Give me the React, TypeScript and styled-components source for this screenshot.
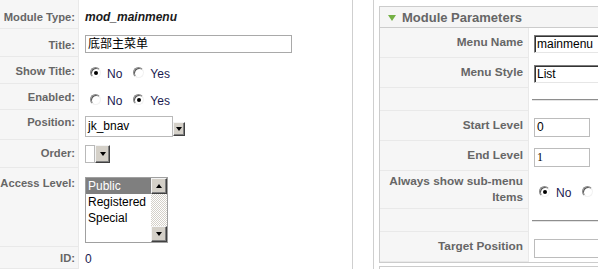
import * as React from 'react'
import styled, { createGlobalStyle } from 'styled-components'

const GlobalStyle = createGlobalStyle`
  html, body {
    margin: 0;
    padding: 0;
    background: #fff;
  }
  body {
    font-family: "Liberation Sans", Arial, Helvetica, sans-serif;
    overflow: hidden;
  }
`

const Page = styled.div`
  display: flex;
  width: 598px;
  height: 269px;
  overflow: hidden;
  background: #fff;
`

/* ---------- left: module details ---------- */

const DetailsPane = styled.div`
  flex: none;
  width: 414px;
  margin-left: -62px;
  border-right: 1px solid #cfcfcf;
  display: flex;
  flex-direction: column;
`

const DetailRow = styled.div<{ $h?: number }>`
  display: grid;
  grid-template-columns: 141px 1fr;
  height: ${p => (p.$h ? `${p.$h}px` : 'auto')};
  flex: ${p => (p.$h ? 'none' : '1')};
`

const Key = styled.div<{ $top: number }>`
  box-sizing: border-box;
  background: #f6f6f6;
  border-right: 1px solid #e9e9e9;
  border-bottom: 1px solid #e9e9e9;
  padding: ${p => p.$top}px 3px 0 0;
  text-align: right;
  font-size: 11.2px;
  line-height: 13px;
  font-weight: bold;
  color: #666;
  white-space: nowrap;
`

const Value = styled.div<{ $top: number }>`
  padding: ${p => p.$top}px 0 0 6px;
  font-size: 12px;
  line-height: 14px;
  color: #1a1a50;
`

const ModuleType = styled.span`
  font-weight: bold;
  font-style: italic;
  color: #1a1a1a;
`

const TextBox = styled.div<{ $w: number }>`
  box-sizing: border-box;
  width: ${p => p.$w}px;
  height: 18px;
  border: 1px solid #a9a9a9;
  padding: 0 2px;
  background: #fff;
  font-family: "Liberation Sans", "Noto Sans CJK SC", sans-serif;
  font-size: 12px;
  line-height: 16px;
  color: #000;
`

const RadioGroup = styled.div`
  display: flex;
  align-items: flex-start;
  padding-left: 5px;
  white-space: nowrap;
`

const Radio = styled.span<{ $on?: boolean }>`
  flex: none;
  box-sizing: border-box;
  width: 11px;
  height: 11px;
  border-radius: 50%;
  background: #fff;
  border: 1px solid;
  border-color: #8a8a8a #f2f2f2 #f2f2f2 #8a8a8a;
  box-shadow: inset 1px 1px 0 #5a5a5a;
  display: flex;
  align-items: center;
  justify-content: center;

  &::after {
    content: '';
    display: ${p => (p.$on ? 'block' : 'none')};
    width: 4px;
    height: 4px;
    margin: 1px 0 0 1px;
    border-radius: 50%;
    background: #000;
  }
`

const RadioText = styled.span`
  margin: 0 11px 0 6px;
  font-size: 12px;
  line-height: 14px;
  color: #1a1a50;
`

const Dropdown = styled.div`
  display: flex;
  align-items: flex-end;
`

const DropField = styled.div<{ $w: number; $h: number }>`
  box-sizing: border-box;
  width: ${p => p.$w}px;
  height: ${p => p.$h}px;
  border: 1px solid #b9b9b9;
  background: #fff;
  padding-left: 2px;
  font-size: 12px;
  line-height: ${p => p.$h - 2}px;
  color: #000;
`

const DropButton = styled.div<{ $w: number; $h: number; $lift?: number }>`
  box-sizing: border-box;
  flex: none;
  width: ${p => p.$w}px;
  height: ${p => p.$h}px;
  margin-bottom: ${p => p.$lift ?? 0}px;
  background: #d4d0c8;
  border: 1px solid;
  border-color: #f4f4f4 #404040 #404040 #f4f4f4;
  box-shadow: inset -1px -1px 0 #808080;
  display: flex;
  align-items: center;
  justify-content: center;
`

const ArrowDown = styled.span`
  width: 0;
  height: 0;
  border-left: 3px solid transparent;
  border-right: 3px solid transparent;
  border-top: 4px solid #000;
`

const ArrowUp = styled.span`
  width: 0;
  height: 0;
  border-left: 3px solid transparent;
  border-right: 3px solid transparent;
  border-bottom: 4px solid #000;
`

const ListBox = styled.div`
  box-sizing: border-box;
  display: flex;
  width: 83px;
  height: 66px;
  border: 1px solid #a0a0a0;
  background: #fff;
`

const ListItems = styled.div`
  flex: 1;
  font-size: 12px;
  line-height: 16px;
`

const ListItem = styled.div<{ $selected?: boolean }>`
  padding-left: 2px;
  background: ${p => (p.$selected ? '#7f7f7f' : 'transparent')};
  color: ${p => (p.$selected ? '#fff' : '#000')};
`

const ScrollTrack = styled.div`
  flex: none;
  width: 16px;
  display: flex;
  flex-direction: column;
  justify-content: space-between;
  background-image: repeating-conic-gradient(#d4d0c8 0% 25%, #ffffff 0% 50%);
  background-size: 2px 2px;
`

const ScrollButton = styled(DropButton)`
  width: 16px;
  height: 16px;
`

/* ---------- right: module parameters ---------- */

const ParamsPane = styled.div`
  flex: none;
  width: 260px;
  margin-left: 20px;
  border-left: 1px solid #cfcfcf;
  padding: 6px 0 0 5px;
  display: flex;
  flex-direction: column;
  gap: 3px;
`

const Slider = styled.div`
  flex: none;
  width: 300px;
  border: 1px solid #cccccc;
  background: #fff;
`

const NextSlider = styled.div`
  flex: 1;
  width: 300px;
  border-top: 1px solid #cccccc;
  border-left: 1px solid #cccccc;
`

const SliderTitle = styled.div`
  display: flex;
  align-items: center;
  gap: 6px;
  height: 20px;
  padding-left: 8px;
  background: #f5f5f5;
  border-bottom: 1px solid #cccccc;
  font-size: 13px;
  font-weight: bold;
  color: #666;
`

const Toggle = styled.span`
  width: 0;
  height: 0;
  margin-top: 1px;
  border-left: 4.5px solid transparent;
  border-right: 4.5px solid transparent;
  border-top: 6px solid #74b044;
`

const ParamRow = styled.div<{ $h: number }>`
  display: grid;
  grid-template-columns: 149px 1fr;
  height: ${p => p.$h}px;
`

const ParamKey = styled.div`
  box-sizing: border-box;
  display: flex;
  align-items: center;
  justify-content: flex-end;
  text-align: right;
  padding: 0 5px 0 4px;
  background: #f6f6f6;
  border-right: 1px solid #e9e9e9;
  border-bottom: 1px solid #e9e9e9;
  font-size: 11.8px;
  line-height: 15.5px;
  font-weight: bold;
  color: #666;
`

const ParamValue = styled.div<{ $top?: number }>`
  display: flex;
  align-items: ${p => (p.$top !== undefined ? 'flex-start' : 'center')};
  padding: ${p => p.$top ?? 0}px 0 0 5px;
  white-space: nowrap;
`

const Field = styled.div<{ $w: number; $h: number; $inset?: boolean; $serif?: boolean }>`
  box-sizing: border-box;
  flex: none;
  width: ${p => p.$w}px;
  height: ${p => p.$h}px;
  margin-top: 2px;
  background: #fff;
  padding-left: 2px;
  font-family: ${p => (p.$serif ? '"Liberation Serif", "Times New Roman", serif' : 'inherit')};
  font-size: 12px;
  line-height: ${p => p.$h - 2}px;
  color: #000;
  border: 1px solid #bcbcbc;
  ${p =>
    p.$inset &&
    `
    border-color: #7b7b7b #e6e6e6 #e6e6e6 #7b7b7b;
    box-shadow: inset 1px 1px 0 #333;
  `}
`

const Rule = styled.div`
  flex: 1;
  margin-left: -2px;
  border-top: 1px solid #8e8e8e;
  border-bottom: 1px solid #e4e4e4;
`

interface Choice {
  label?: string;
  on?: boolean;
}

const Radios: React.FC<{ choices: Choice[] }> = ({ choices }) => (
  <RadioGroup>
    {choices.map((c, i) => (
      <React.Fragment key={i}>
        <Radio $on={c.on} />
        {c.label && <RadioText>{c.label}</RadioText>}
      </React.Fragment>
    ))}
  </RadioGroup>
)

const App: React.FC = () => {
  return (
    <Page>
      <GlobalStyle />
      <DetailsPane>
        <DetailRow $h={29}>
          <Key $top={11}>Module Type:</Key>
          <Value $top={10}>
            <ModuleType>mod_mainmenu</ModuleType>
          </Value>
        </DetailRow>
        <DetailRow $h={28}>
          <Key $top={10}>Title:</Key>
          <Value $top={6}>
            <TextBox $w={207}>底部主菜单</TextBox>
          </Value>
        </DetailRow>
        <DetailRow $h={27}>
          <Key $top={8}>Show Title:</Key>
          <Value $top={10}>
            <Radios choices={[{ label: 'No', on: true }, { label: 'Yes' }]} />
          </Value>
        </DetailRow>
        <DetailRow $h={26}>
          <Key $top={7}>Enabled:</Key>
          <Value $top={10}>
            <Radios choices={[{ label: 'No' }, { label: 'Yes', on: true }]} />
          </Value>
        </DetailRow>
        <DetailRow $h={30}>
          <Key $top={6}>Position:</Key>
          <Value $top={6}>
            <Dropdown>
              <DropField $w={88} $h={21}>jk_bnav</DropField>
              <DropButton $w={12} $h={14} $lift={1}>
                <ArrowDown />
              </DropButton>
            </Dropdown>
          </Value>
        </DetailRow>
        <DetailRow $h={28}>
          <Key $top={7}>Order:</Key>
          <Value $top={5}>
            <Dropdown>
              <DropField $w={10} $h={18} />
              <DropButton $w={15} $h={18}>
                <ArrowDown />
              </DropButton>
            </Dropdown>
          </Value>
        </DetailRow>
        <DetailRow $h={79}>
          <Key $top={9}>Access Level:</Key>
          <Value $top={9}>
            <ListBox>
              <ListItems>
                <ListItem $selected>Public</ListItem>
                <ListItem>Registered</ListItem>
                <ListItem>Special</ListItem>
              </ListItems>
              <ScrollTrack>
                <ScrollButton $w={16} $h={16}>
                  <ArrowUp />
                </ScrollButton>
                <ScrollButton $w={16} $h={16}>
                  <ArrowDown />
                </ScrollButton>
              </ScrollTrack>
            </ListBox>
          </Value>
        </DetailRow>
        <DetailRow>
          <Key $top={5}>ID:</Key>
          <Value $top={5}>0</Value>
        </DetailRow>
      </DetailsPane>

      <ParamsPane>
        <Slider>
          <SliderTitle>
            <Toggle />
            Module Parameters
          </SliderTitle>
          <ParamRow $h={30}>
            <ParamKey>Menu Name</ParamKey>
            <ParamValue>
              <Field $w={150} $h={18} $inset>mainmenu</Field>
            </ParamValue>
          </ParamRow>
          <ParamRow $h={30}>
            <ParamKey>Menu Style</ParamKey>
            <ParamValue>
              <Field $w={150} $h={18} $inset>List</Field>
            </ParamValue>
          </ParamRow>
          <ParamRow $h={23}>
            <ParamKey />
            <ParamValue>
              <Rule />
            </ParamValue>
          </ParamRow>
          <ParamRow $h={30}>
            <ParamKey>Start Level</ParamKey>
            <ParamValue>
              <Field $w={56} $h={19}>0</Field>
            </ParamValue>
          </ParamRow>
          <ParamRow $h={30}>
            <ParamKey>End Level</ParamKey>
            <ParamValue>
              <Field $w={56} $h={19} $serif>1</Field>
            </ParamValue>
          </ParamRow>
          <ParamRow $h={38}>
            <ParamKey>Always show sub-menu Items</ParamKey>
            <ParamValue $top={15}>
              <Radios choices={[{ label: 'No', on: true }, {}]} />
            </ParamValue>
          </ParamRow>
          <ParamRow $h={23}>
            <ParamKey />
            <ParamValue>
              <Rule />
            </ParamValue>
          </ParamRow>
          <ParamRow $h={30}>
            <ParamKey>Target Position</ParamKey>
            <ParamValue>
              <Field $w={150} $h={19} />
            </ParamValue>
          </ParamRow>
        </Slider>
        <NextSlider />
      </ParamsPane>
    </Page>
  )
}

export default App
